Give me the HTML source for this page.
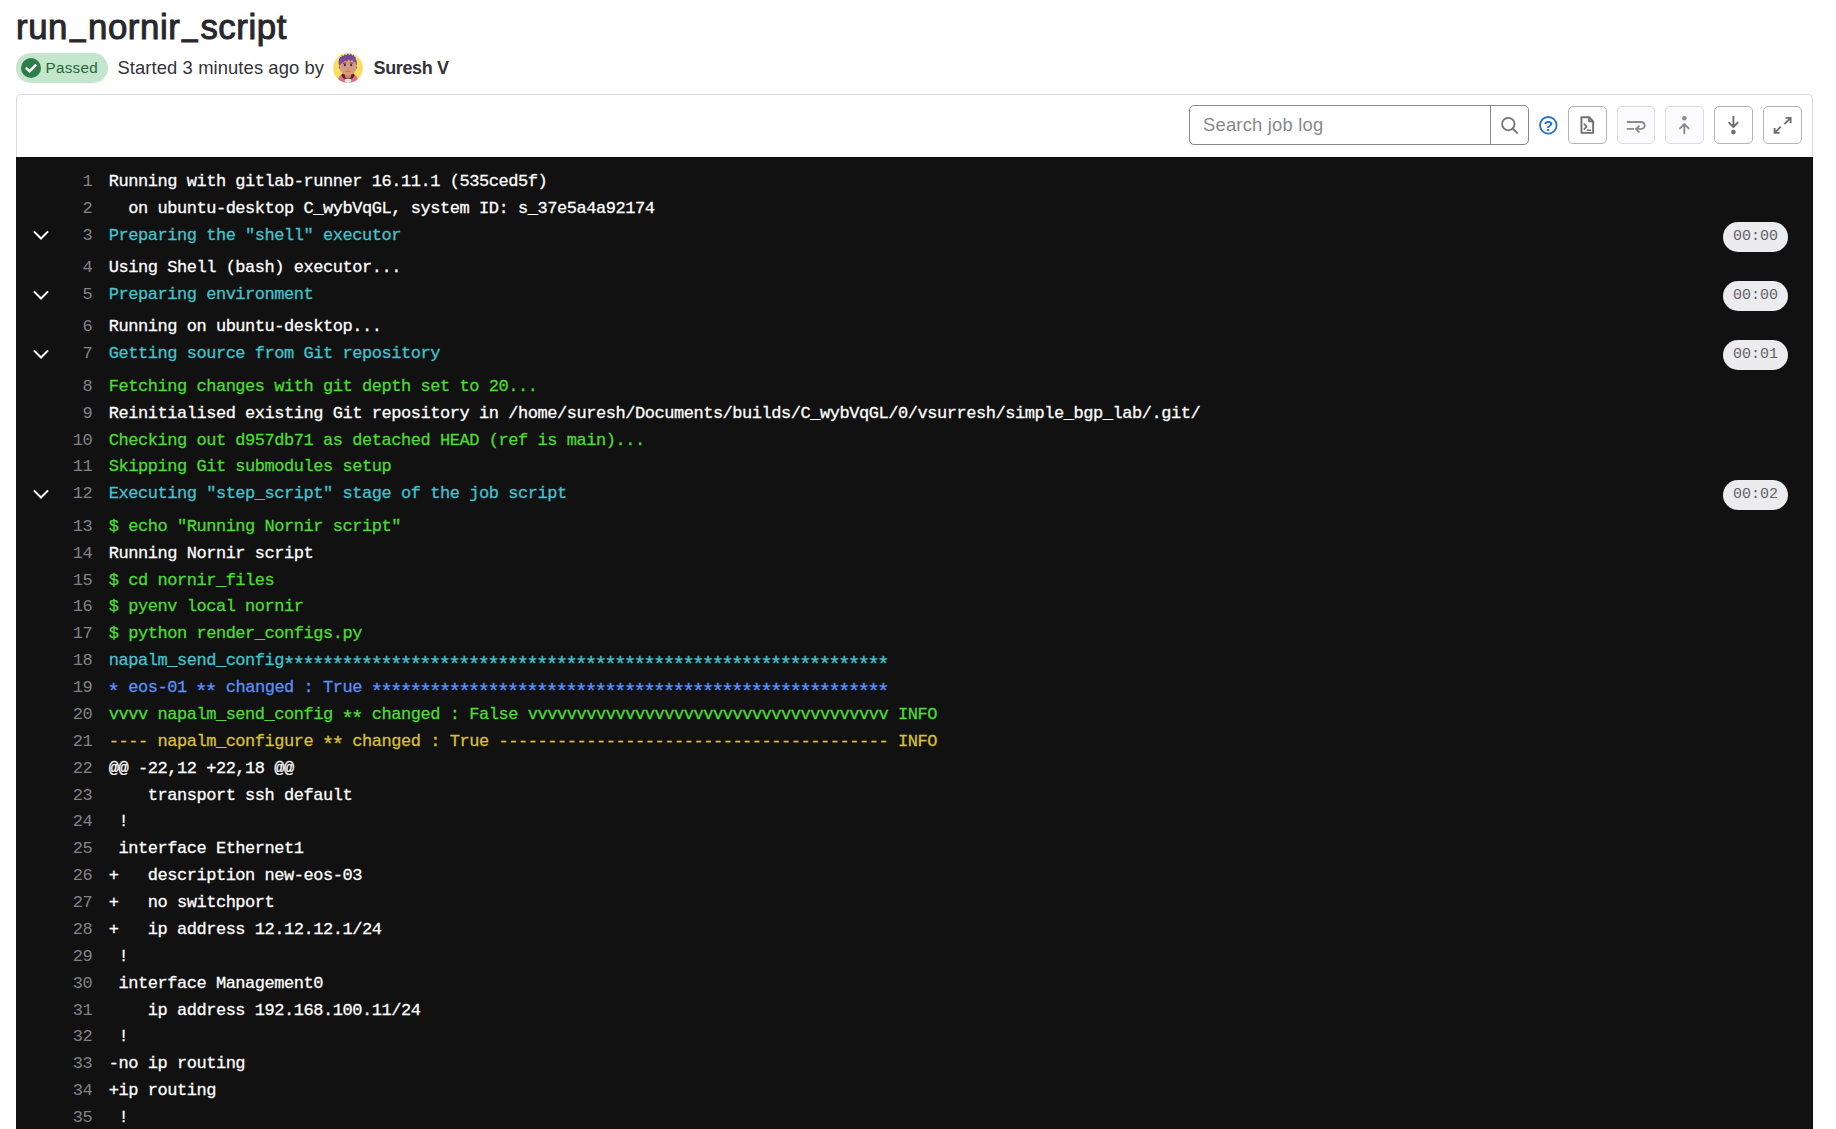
<!DOCTYPE html>
<html lang="en">
<head>
<meta charset="utf-8">
<title>run_nornir_script</title>
<style>
*{box-sizing:border-box;margin:0;padding:0}
html,body{width:1836px;height:1129px;overflow:hidden;background:#fff}
body{font-family:"Liberation Sans",sans-serif;color:#333238;position:relative}
h1{position:absolute;left:16px;top:3.6px;font-size:34.8px;line-height:46px;font-weight:normal;-webkit-text-stroke:1px #28272d;color:#28272d;white-space:nowrap;letter-spacing:0.58px}
h1 .u{display:inline-block;transform:translateY(-4px) scaleX(.8)}
.status{position:absolute;left:16px;top:53px;width:92px;height:30px;border-radius:15px;background:#c3e6cd;color:#24663b;font-size:15.2px;line-height:30px;white-space:nowrap}
.status svg{position:absolute;left:5px;top:5px;width:20px;height:20px}
.status span{position:absolute;left:29.5px;top:0;letter-spacing:.3px}
.started{position:absolute;left:117.5px;top:53px;font-size:18.4px;letter-spacing:.09px;line-height:30px;color:#333238;white-space:nowrap}
.avatar{position:absolute;left:333px;top:53px;width:30px;height:30px}
.user{position:absolute;left:373.5px;top:53px;font-size:18px;letter-spacing:-0.35px;line-height:30px;font-weight:bold;color:#333238;white-space:nowrap}
.panel{position:absolute;left:16px;top:94px;width:1797px;height:64px;border:1px solid #dcdcde;border-bottom:none;border-radius:5px 5px 0 0;background:#fff}
.search{position:absolute;left:1189px;top:105px;width:340px;height:40px;border:1px solid #89888d;border-radius:5px;background:#fff}
.search .ph{position:absolute;left:13px;top:0;line-height:38px;font-size:18.4px;letter-spacing:0.2px;color:#89888d;white-space:nowrap}
.search .div{position:absolute;left:300px;top:0;width:1px;height:38px;background:#89888d}
.btn{position:absolute;top:106px;width:38.75px;height:37.5px;border:1px solid #b4b3b9;border-radius:5px;background:#fff}
.btn.dis{background:#fbfafd;border-color:#dcdcde}
.log{position:absolute;left:16px;top:157px;width:1797px;height:972px;background:#111;overflow:hidden;font-family:"Liberation Mono",monospace;font-size:17px;letter-spacing:-0.4567px;color:#fff;padding-top:11.8px;-webkit-text-stroke:0.28px currentColor}
.l{position:relative;height:26.875px;line-height:26.875px;white-space:pre}
.l.h{height:32.5px}
.n{position:absolute;left:0;top:0;width:76.2px;text-align:right;color:#828287;-webkit-text-stroke:0}
.t{position:absolute;left:92.7px;top:0}
.b{font-weight:normal}
.a{position:relative;left:-1.4px;top:5.6px;font-size:21px;line-height:0;letter-spacing:-2.859px}
.cy{color:#41c3cd}.gr{color:#4bdc32}.bl{color:#5a90f8}.ye{color:#d9c030}
.chev{position:absolute;left:15px;top:2.8px;width:20px;height:20px}
.dur{position:absolute;right:25px;top:-0.9px;-webkit-text-stroke:0;letter-spacing:0;height:30px;width:65px;border-radius:15px;background:#ececef;color:#626168;font-size:15px;line-height:30px;text-align:center}
</style>
</head>
<body>
<h1>run<span class="u">_</span>nornir<span class="u">_</span>script</h1>
<div class="status"><svg viewBox="0 0 20 20"><circle cx="10" cy="10" r="10" fill="#2e7d4a"/><path d="M5.6 10.4l3 3 5.8-6" fill="none" stroke="#fff" stroke-width="2.5" stroke-linecap="round" stroke-linejoin="round"/></svg><span>Passed</span></div>
<div class="started">Started 3 minutes ago by</div>
<svg class="avatar" viewBox="0 0 30 30"><defs><clipPath id="av"><circle cx="15" cy="15" r="14.9"/></clipPath><linearGradient id="hr" x1="0" y1="0" x2="0" y2="1"><stop offset="0" stop-color="#6448a6"/><stop offset="1" stop-color="#8a4a8c"/></linearGradient></defs>
<g clip-path="url(#av)"><rect width="30" height="30" fill="#f8de62"/>
<path d="M4.300 30c.3-5 2.700-8.200 6.400-9.700l4.300 3 4.300-3c3.700 1.500 6.100 4.700 6.400 9.700z" fill="#d9708c"/>
<path d="M8.300 22.400c1-2 2.900-2.900 4.700-2.900h4c1.800 0 3.700.9 4.700 2.900l-3.400 4.600h-6.600z" fill="#6a1f27"/>
<path d="M11.300 26.300c1.200-.9 6.200-.9 7.400 0l-1.200 3.700h-5z" fill="#e4e4e4"/>
<path d="M12 18h6v6.200c-1.500 1.600-4.500 1.600-6 0z" fill="#c98668"/>
<ellipse cx="6.900" cy="14.600" rx="1.100" ry="1.600" fill="#b87058"/><ellipse cx="23.100" cy="14.600" rx="1.100" ry="1.600" fill="#b87058"/>
<path d="M7 11c0-4 3.500-5.500 8-5.500s8 1.500 8 5.500v4c0 4-3.500 7.300-8 7.300s-8-3.300-8-7.300z" fill="#d99b7c"/>
<path d="M10.000 10.200l3.300-.3M16.700 9.900l3.300.3" stroke="#4a2a22" stroke-width=".9" fill="none"/>
<ellipse cx="11.700" cy="12.300" rx="1.400" ry="1.500" fill="#9a86d0"/><ellipse cx="18.300" cy="12.300" rx="1.400" ry="1.500" fill="#9a86d0"/>
<circle cx="11.900" cy="12.000" r=".9" fill="#1d1822"/><circle cx="18.100" cy="12.000" r=".9" fill="#1d1822"/>
<path d="M14.300 16.100q.7.500 1.400 0" stroke="#b56a58" stroke-width=".7" fill="none"/>
<path d="M12.700 18.300q2.300 1.100 4.600 0" stroke="#a86a60" stroke-width=".7" fill="none"/>
<path d="M6.700 13.500c-.9-3.500-.5-6.500 1.300-8.200l.8.500.6-1.800 1.500.6.900-1.500 1.500.8 1.600-1.400 1.300 1.200 1.800-1 .9 1.400 1.600-.3.500 1.500 1.300.3-.2 1.700c1.400 1.400 1.600 3.700.9 6.200l-1.300-3.700-1.500.4-1.300-2.400-1.600 1.600-1.700-1.600-1.600 1.800-1.700-1-1.200 1.700-1.400.2-1 1.200z" fill="url(#hr)" transform="translate(-1.1 -2.2) scale(1.07 1.12)"/>
</g></svg>
<div class="user">Suresh V</div>
<div class="panel"></div>
<div class="search"><span class="ph">Search job log</span><span class="div"></span></div>
<div class="btn" style="left:1568px"></div>
<div class="btn dis" style="left:1617.2px;width:38px"></div>
<div class="btn dis" style="left:1665.2px"></div>
<div class="btn" style="left:1714px"></div>
<div class="btn" style="left:1763px"></div>
<svg class="tb" viewBox="1480 100 340 50" style="position:absolute;left:1480px;top:100px;width:340px;height:50px" fill="none" stroke-width="1.9">
<g stroke="#737278" stroke-width="1.8"><circle cx="1508.3" cy="124.1" r="6.2"/><path d="M1512.7 128.5l4.4 4.4" stroke-linecap="round"/></g>
<g stroke="#2870c8" stroke-width="1.8"><circle cx="1548.3" cy="125.3" r="8.3"/></g>
<text x="1548.3" y="131" text-anchor="middle" font-family="Liberation Sans, sans-serif" font-weight="bold" font-size="15.5" fill="#2870c8" stroke="none">?</text>
<g stroke="#6e6d75" stroke-linejoin="round"><path d="M1581.45 117.25h7.6l4.1 4.1v11.5h-11.7z"/><path d="M1589 117.3v4.1h4.1" stroke-width="1.6"/><path d="M1584.2 124.1l2.5 2.5-2.5 2.5M1587.4 130.3h3.2" stroke-width="1.5" stroke-linecap="round"/></g>
<g stroke="#8c8b92" stroke-linecap="round" stroke-linejoin="round"><path d="M1627.6 122h13.6a3.45 3.45 0 0 1 0 6.9h-5M1627.6 128.9h5.6M1638.9 126.2l-2.9 2.7 2.9 2.9"/></g>
<g stroke="#8c8b92" stroke-linecap="round" stroke-linejoin="round"><path d="M1684.3 133.4v-9.2M1680 128.4l4.3-4.4 4.3 4.4"/><circle cx="1684.3" cy="118.3" r="2.3" fill="#8c8b92" stroke="none"/></g>
<g stroke="#6e6d75" stroke-linecap="round" stroke-linejoin="round"><path d="M1733.4 116.6v10.2M1729.1 122.6l4.3 4.4 4.3-4.4"/><circle cx="1733.4" cy="132.1" r="2.3" fill="#6e6d75" stroke="none"/></g>
<g stroke="#6e6d75" stroke-linejoin="miter"><path d="M1785.6 117.9h5v5M1790.3 118.2l-5.9 5.9M1774.6 127.9v5h5M1774.9 132.6l5.9-5.9"/></g>
</svg>
<div class="log">
<div class="l"><span class="n">1</span><span class="t">Running with gitlab-runner 16.11.1 (535ced5f)</span></div>
<div class="l"><span class="n">2</span><span class="t">  on ubuntu-desktop C_wybVqGL, system ID: s_37e5a4a92174</span></div>
<div class="l h"><svg class="chev" viewBox="0 0 20 20"><path d="M2.9 6.4l7.1 7.1 7.1-7.1" fill="none" stroke="#fff" stroke-width="2"/></svg><span class="n">3</span><span class="t cy b">Preparing the "shell" executor</span><span class="dur">00:00</span></div>
<div class="l"><span class="n">4</span><span class="t">Using Shell (bash) executor...</span></div>
<div class="l h"><svg class="chev" viewBox="0 0 20 20"><path d="M2.9 6.4l7.1 7.1 7.1-7.1" fill="none" stroke="#fff" stroke-width="2"/></svg><span class="n">5</span><span class="t cy b">Preparing environment</span><span class="dur">00:00</span></div>
<div class="l"><span class="n">6</span><span class="t">Running on ubuntu-desktop...</span></div>
<div class="l h"><svg class="chev" viewBox="0 0 20 20"><path d="M2.9 6.4l7.1 7.1 7.1-7.1" fill="none" stroke="#fff" stroke-width="2"/></svg><span class="n">7</span><span class="t cy b">Getting source from Git repository</span><span class="dur">00:01</span></div>
<div class="l"><span class="n">8</span><span class="t gr b">Fetching changes with git depth set to 20...</span></div>
<div class="l"><span class="n">9</span><span class="t">Reinitialised existing Git repository in /home/suresh/Documents/builds/C_wybVqGL/0/vsurresh/simple_bgp_lab/.git/</span></div>
<div class="l"><span class="n">10</span><span class="t gr b">Checking out d957db71 as detached HEAD (ref is main)...</span></div>
<div class="l"><span class="n">11</span><span class="t gr b">Skipping Git submodules setup</span></div>
<div class="l h"><svg class="chev" viewBox="0 0 20 20"><path d="M2.9 6.4l7.1 7.1 7.1-7.1" fill="none" stroke="#fff" stroke-width="2"/></svg><span class="n">12</span><span class="t cy b">Executing "step_script" stage of the job script</span><span class="dur">00:02</span></div>
<div class="l"><span class="n">13</span><span class="t gr b">$ echo "Running Nornir script"</span></div>
<div class="l"><span class="n">14</span><span class="t">Running Nornir script</span></div>
<div class="l"><span class="n">15</span><span class="t gr b">$ cd nornir_files</span></div>
<div class="l"><span class="n">16</span><span class="t gr b">$ pyenv local nornir</span></div>
<div class="l"><span class="n">17</span><span class="t gr b">$ python render_configs.py</span></div>
<div class="l"><span class="n">18</span><span class="t cy b">napalm_send_config<span class="a">**************************************************************</span></span></div>
<div class="l"><span class="n">19</span><span class="t bl b"><span class="a">*</span> eos-01 <span class="a">**</span> changed : True <span class="a">*****************************************************</span></span></div>
<div class="l"><span class="n">20</span><span class="t gr b">vvvv napalm_send_config <span class="a">**</span> changed : False vvvvvvvvvvvvvvvvvvvvvvvvvvvvvvvvvvvvv INFO</span></div>
<div class="l"><span class="n">21</span><span class="t ye b">---- napalm_configure <span class="a">**</span> changed : True ---------------------------------------- INFO</span></div>
<div class="l"><span class="n">22</span><span class="t">@@ -22,12 +22,18 @@</span></div>
<div class="l"><span class="n">23</span><span class="t">    transport ssh default</span></div>
<div class="l"><span class="n">24</span><span class="t"> !</span></div>
<div class="l"><span class="n">25</span><span class="t"> interface Ethernet1</span></div>
<div class="l"><span class="n">26</span><span class="t">+   description new-eos-03</span></div>
<div class="l"><span class="n">27</span><span class="t">+   no switchport</span></div>
<div class="l"><span class="n">28</span><span class="t">+   ip address 12.12.12.1/24</span></div>
<div class="l"><span class="n">29</span><span class="t"> !</span></div>
<div class="l"><span class="n">30</span><span class="t"> interface Management0</span></div>
<div class="l"><span class="n">31</span><span class="t">    ip address 192.168.100.11/24</span></div>
<div class="l"><span class="n">32</span><span class="t"> !</span></div>
<div class="l"><span class="n">33</span><span class="t">-no ip routing</span></div>
<div class="l"><span class="n">34</span><span class="t">+ip routing</span></div>
<div class="l"><span class="n">35</span><span class="t"> !</span></div>
</div>
</body>
</html>
